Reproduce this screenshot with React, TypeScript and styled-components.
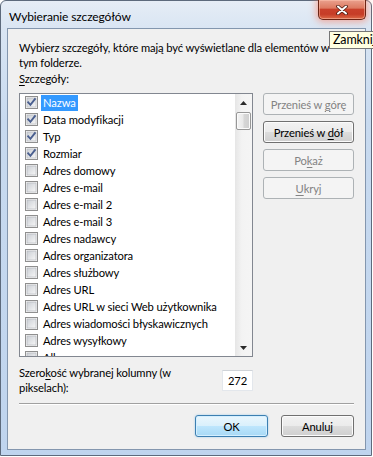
import React from 'react';
import styled, { createGlobalStyle } from 'styled-components';

const GlobalStyle = createGlobalStyle`
  html, body { margin: 0; padding: 0; background: #ffffff; overflow: hidden; }
  body { font-family: Lato, "Liberation Sans", sans-serif; font-size: 11.2px; letter-spacing: -0.12px; color: #000; }
  * { box-sizing: border-box; }
`;

const Window = styled.div`
  position: relative;
  width: 372px;
  height: 456px;
  border: 1px solid #5d6a7c;
  border-radius: 6px 6px 0 0;
  background: linear-gradient(to bottom, #e6edf6 0px, #d9e5f3 28px, #c8daef 120px, #bfd4ee 100%);
  display: flex;
  flex-direction: column;
`;

const TitleBar = styled.div`
  height: 27px;
  display: flex;
  align-items: flex-start;
  padding-left: 8px;
`;

const Title = styled.div`
  font-size: 12px;
  line-height: 15px;
  padding-top: 8px;
  color: #000;
  white-space: nowrap;
`;

const CloseButton = styled.div`
  margin-left: auto;
  margin-right: 5px;
  margin-top: -1px;
  width: 48px;
  height: 20px;
  border: 1px solid #6b2414;
  border-top: none;
  border-radius: 0 0 5px 5px;
  background: linear-gradient(to bottom, #eaa18e 0%, #dd7a61 42%, #c9402a 50%, #c63d27 75%, #dc6a47 100%);
  box-shadow: 0 0 7px 2px rgba(255, 120, 90, 0.55), inset 0 0 0 1px rgba(255, 200, 180, 0.5);
  display: flex;
  align-items: center;
  justify-content: center;
`;

const Client = styled.div`
  flex: 1;
  margin: 0 5px 5px 6px;
  border: 1px solid #8396ae;
  background: #f0f0f0;
  padding: 11px 11px 11px 11px;
  display: flex;
  flex-direction: column;
`;

const Description = styled.p`
  margin: 0 0 1px;
  line-height: 15px;
  white-space: nowrap;
`;

const SectionLabel = styled.div`
  line-height: 15px;
  margin-bottom: 7px;
`;

const Key = styled.span`
  text-decoration: underline;
  text-underline-offset: 2px;
`;

const MainRow = styled.div`
  display: flex;
  justify-content: space-between;
  height: 264px;
`;

const ListBox = styled.div`
  width: 234px;
  height: 264px;
  border: 1px solid #828790;
  background: #ffffff;
  display: flex;
  overflow: hidden;
`;

const Rows = styled.div`
  flex: 1;
  overflow: hidden;
`;

const Row = styled.div`
  height: 17px;
  display: flex;
  align-items: center;
  padding-left: 5px;
  gap: 3px;
`;

const ItemLabel = styled.span<{ $selected?: boolean }>`
  height: 16px;
  line-height: 16px;
  padding: 0 2px;
  white-space: nowrap;
  background: ${(p) => (p.$selected ? '#3399ff' : 'transparent')};
  color: ${(p) => (p.$selected ? '#ffffff' : '#000000')};
`;

const ScrollBar = styled.div`
  width: 17px;
  display: flex;
  flex-direction: column;
  background: linear-gradient(to right, #e6e6e6 0%, #f3f3f3 40%, #f5f5f5 100%);
`;

const ScrollArrow = styled.div`
  height: 17px;
  display: flex;
  align-items: center;
  justify-content: center;
`;

const Thumb = styled.div`
  margin: 1px 1px 0 1px;
  height: 18px;
  border: 1px solid #979797;
  border-radius: 2px;
  background: linear-gradient(to right, #f4f4f4 0%, #e9e9e9 45%, #d6d6d6 55%, #cfcfcf 100%);
  box-shadow: inset 0 0 0 1px #fbfbfb;
`;

const ScrollSpacer = styled.div`
  flex: 1;
`;

const ButtonColumn = styled.div`
  width: 91px;
  display: flex;
  flex-direction: column;
  gap: 6px;
`;

const Button = styled.div<{ $disabled?: boolean; $default?: boolean; $width?: number }>`
  width: ${(p) => (p.$width ? `${p.$width}px` : '100%')};
  height: 22px;
  border-radius: 3px;
  display: flex;
  align-items: center;
  justify-content: center;
  white-space: nowrap;
  line-height: 15px;
  border: 1px solid ${(p) => (p.$disabled ? '#adb2b5' : p.$default ? '#3c7fb1' : '#707070')};
  color: ${(p) => (p.$disabled ? '#838383' : '#000')};
  background: ${(p) =>
    p.$disabled
      ? '#f4f4f4'
      : p.$default
      ? 'linear-gradient(to bottom, #eaf6fd 0%, #d9f0fc 50%, #bee6fd 50%, #a7d9f5 100%)'
      : 'linear-gradient(to bottom, #f2f2f2 0%, #ebebeb 50%, #dddddd 50%, #cfcfcf 100%)'};
  box-shadow: ${(p) =>
    p.$disabled
      ? 'none'
      : p.$default
      ? 'inset 0 0 0 1px #d4efff, 0 0 2px rgba(60, 160, 230, 0.5)'
      : 'inset 0 0 0 1px #fcfcfc'};
`;

const WidthRow = styled.div`
  margin-top: 8px;
  width: 234px;
  display: flex;
  justify-content: space-between;
  align-items: flex-start;
`;

const WidthLabel = styled.div`
  line-height: 15px;
`;

const NumberBox = styled.div`
  margin-top: 5px;
  width: 31px;
  height: 21px;
  background: #ffffff;
  border: 1px solid #e3e7ec;
  border-top-color: #cfd3d8;
  display: flex;
  align-items: center;
  justify-content: center;
  line-height: 15px;
`;

const Separator = styled.div`
  margin-top: 8px;
  height: 2px;
  border-top: 1px solid #a0a0a0;
  border-bottom: 1px solid #ffffff;
`;

const Footer = styled.div`
  margin-top: 10px;
  display: flex;
  justify-content: flex-end;
  gap: 13px;
`;

const Tooltip = styled.div`
  position: absolute;
  top: 30px;
  left: 328px;
  height: 18px;
  padding: 0 3px;
  font-size: 12.5px;
  line-height: 16px;
  background: #ffffe1;
  border: 1px solid #767676;
  white-space: nowrap;
  color: #000;
`;

const CheckBox: React.FC<{ checked?: boolean }> = ({ checked }) => (
  <svg width="13" height="13" viewBox="0 0 13 13" style={{ flex: 'none' }}>
    <defs>
      <linearGradient id="cbIn" x1="0" y1="0" x2="1" y2="1">
        <stop offset="0" stopColor="#cbcfd5" />
        <stop offset="1" stopColor="#f7f7f7" />
      </linearGradient>
    </defs>
    <rect x="0.5" y="0.5" width="12" height="12" fill="#f4f4f4" stroke="#8f8f8f" />
    <rect x="2" y="2" width="9" height="9" fill="url(#cbIn)" stroke="#aeb3b9" strokeWidth="0.6" />
    {checked && (
      <path d="M3.2 6.4 L5.4 8.8 L9.9 3.2" fill="none" stroke="#4a5f8f" strokeWidth="1.9" strokeLinecap="square" />
    )}
  </svg>
);

const Arrow: React.FC<{ down?: boolean }> = ({ down }) => (
  <svg width="7" height="4" viewBox="0 0 7 4">
    <path d={down ? 'M0 0 L7 0 L3.5 4 Z' : 'M0 4 L7 4 L3.5 0 Z'} fill="#2b2b2b" />
  </svg>
);

const CloseGlyph = () => (
  <svg width="12" height="10" viewBox="0 0 12 10">
    <path d="M2 1.5 L10 8.5 M10 1.5 L2 8.5" stroke="#4a1a10" strokeWidth="3.6" strokeLinecap="round" />
    <path d="M2 1.5 L10 8.5 M10 1.5 L2 8.5" stroke="#ffffff" strokeWidth="2" strokeLinecap="round" />
  </svg>
);

const items: { name: string; checked?: boolean; selected?: boolean }[] = [
  { name: 'Nazwa', checked: true, selected: true },
  { name: 'Data modyfikacji', checked: true },
  { name: 'Typ', checked: true },
  { name: 'Rozmiar', checked: true },
  { name: 'Adres domowy' },
  { name: 'Adres e-mail' },
  { name: 'Adres e-mail 2' },
  { name: 'Adres e-mail 3' },
  { name: 'Adres nadawcy' },
  { name: 'Adres organizatora' },
  { name: 'Adres służbowy' },
  { name: 'Adres URL' },
  { name: 'Adres URL w sieci Web użytkownika' },
  { name: 'Adres wiadomości błyskawicznych' },
  { name: 'Adres wysyłkowy' },
  { name: 'Album' },
];

export default function App() {
  return (
    <>
      <GlobalStyle />
      <Window>
        <TitleBar>
          <Title>Wybieranie szczegółów</Title>
          <CloseButton>
            <CloseGlyph />
          </CloseButton>
        </TitleBar>
        <Client>
          <Description>
            Wybierz szczegóły, które mają być wyświetlane dla elementów w
            <br />
            tym folderze.
          </Description>
          <SectionLabel>
            <Key>S</Key>zczegóły:
          </SectionLabel>
          <MainRow>
            <ListBox>
              <Rows>
                {items.map((it) => (
                  <Row key={it.name}>
                    <CheckBox checked={it.checked} />
                    <ItemLabel $selected={it.selected}>{it.name}</ItemLabel>
                  </Row>
                ))}
              </Rows>
              <ScrollBar>
                <ScrollArrow>
                  <Arrow />
                </ScrollArrow>
                <Thumb />
                <ScrollSpacer />
                <ScrollArrow>
                  <Arrow down />
                </ScrollArrow>
              </ScrollBar>
            </ListBox>
            <ButtonColumn>
              <Button $disabled>
                Przenieś w&nbsp;<Key>g</Key>órę
              </Button>
              <Button>
                Przenieś w&nbsp;<Key>d</Key>ół
              </Button>
              <Button $disabled>
                Po<Key>k</Key>aż
              </Button>
              <Button $disabled>
                <Key>U</Key>kryj
              </Button>
            </ButtonColumn>
          </MainRow>
          <WidthRow>
            <WidthLabel>
              Szero<Key>k</Key>ość wybranej kolumny (w
              <br />
              pikselach):
            </WidthLabel>
            <NumberBox>272</NumberBox>
          </WidthRow>
          <Separator />
          <Footer>
            <Button $default $width={73}>OK</Button>
            <Button $width={73}>Anuluj</Button>
          </Footer>
        </Client>
        <Tooltip>Zamknij</Tooltip>
      </Window>
    </>
  );
}
